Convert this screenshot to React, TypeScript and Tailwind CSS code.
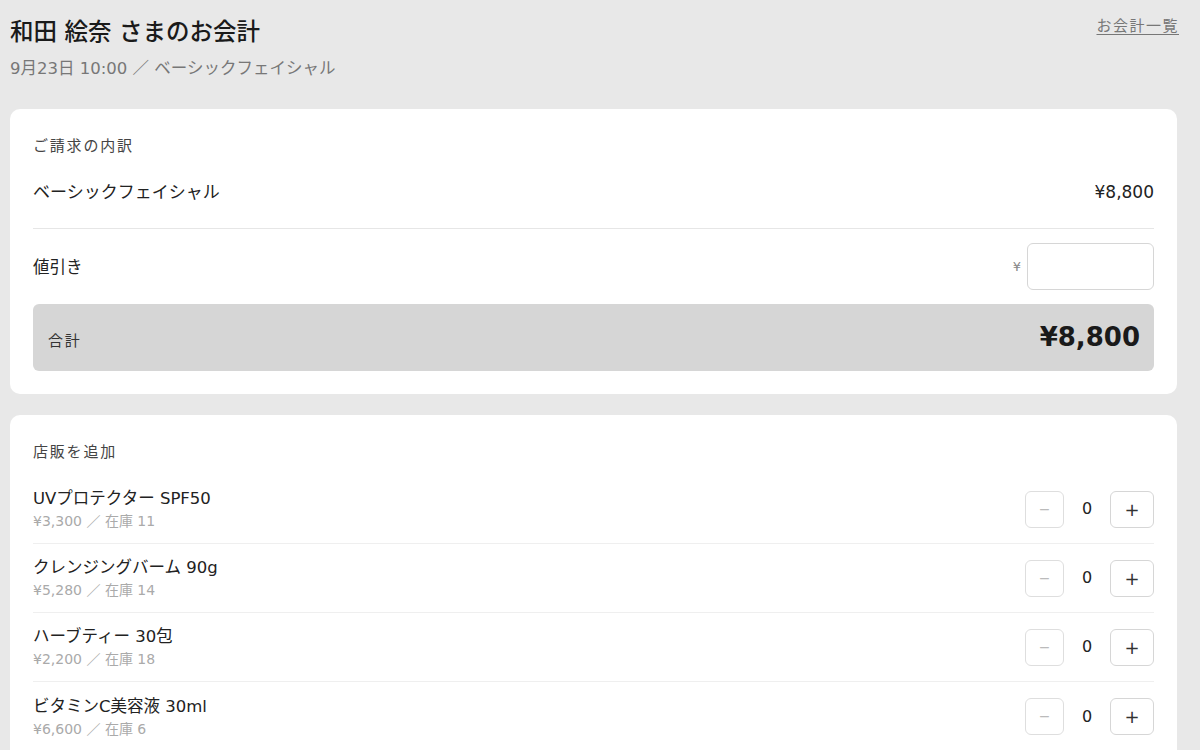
import { useState } from "react";

const products = [
  { name: "UVプロテクター SPF50", price: "¥3,300", stock: 11 },
  { name: "クレンジングバーム 90g", price: "¥5,280", stock: 14 },
  { name: "ハーブティー 30包", price: "¥2,200", stock: 18 },
  { name: "ビタミンC美容液 30ml", price: "¥6,600", stock: 6 },
];

function ProductRow({ name, price, stock, last }: { name: string; price: string; stock: number; last: boolean }) {
  const [qty, setQty] = useState(0);
  return (
    <div className={`flex h-[69px] items-center justify-between ${last ? "" : "border-b border-[#efefef]"}`}>
      <div className="flex flex-col">
        <div className="text-[16.5px] leading-[24px] text-[#222]">{name}</div>
        <div className="text-[14px] leading-[20px] text-[#aaa]">
          {price} ／ 在庫 {stock}
        </div>
      </div>
      <div className="flex items-center">
        <button
          onClick={() => setQty(Math.max(0, qty - 1))}
          className="flex h-[37px] w-[39px] items-center justify-center rounded-[6px] border border-[#dedede] bg-white text-[14px] text-[#bbb]"
        >
          −
        </button>
        <div className="w-[46px] text-center text-[16px] text-[#222]">{qty}</div>
        <button
          onClick={() => setQty(qty + 1)}
          className="flex h-[37px] w-[44px] items-center justify-center rounded-[6px] border border-[#d6d6d6] bg-white text-[18px] text-[#333]"
        >
          +
        </button>
      </div>
    </div>
  );
}

export default function App() {
  return (
    <div
      className="min-h-[750px] bg-[#e8e8e8] px-[10px] pt-[16px]"
      style={{ fontFamily: '"DejaVu Sans", "Noto Sans CJK JP", sans-serif' }}
    >
      <div className="flex items-start justify-between pr-[11px]">
        <div>
          <h1 className="text-[23.5px] font-medium leading-[32px] text-[#1a1a1a]">和田 絵奈 さまのお会計</h1>
          <div className="mt-[9px] text-[16.5px] leading-[24px] text-[#777]">9月23日 10:00 ／ ベーシックフェイシャル</div>
        </div>
        <a href="#" className="-mt-[2px] text-[15px] leading-[24px] tracking-[0.1em] text-[#777] underline underline-offset-[3px]">
          お会計一覧
        </a>
      </div>

      <section className="mt-[28px] mr-[13px] rounded-[10px] bg-white px-[23px] pt-[25px] pb-[23px]">
        <h2 className="text-[15px] leading-[24px] tracking-[0.12em] text-[#444]">ご請求の内訳</h2>
        <div className="mt-[22px] flex items-center justify-between border-b border-[#e6e6e6] pb-[24px] text-[17px] leading-[24px] text-[#222]">
          <span>ベーシックフェイシャル</span>
          <span>¥8,800</span>
        </div>
        <div className="flex items-center justify-between py-[14px]">
          <span className="mt-[3px] text-[16.5px] text-[#222]">値引き</span>
          <div className="flex items-center gap-[6px]">
            <span className="text-[13px] text-[#888]">¥</span>
            <input className="h-[47px] w-[127px] rounded-[6px] border border-[#d6d6d6] bg-white px-2 text-[16px] outline-none" />
          </div>
        </div>
        <div className="flex h-[67px] items-center justify-between rounded-[6px] bg-[#d6d6d6] pl-[15px] pr-[14px]">
          <span className="mt-[8px] text-[15px] tracking-[0.12em] text-[#333]">合計</span>
          <span className="text-[26px] font-bold text-[#1a1a1a]">¥8,800</span>
        </div>
      </section>

      <section className="mt-[21px] mr-[13px] rounded-[10px] bg-white px-[23px] pt-[25px] pb-[10px]">
        <h2 className="mb-[11px] text-[15px] leading-[24px] tracking-[0.12em] text-[#444]">店販を追加</h2>
        {products.map((p, i) => (
          <ProductRow key={p.name} {...p} last={i === products.length - 1} />
        ))}
      </section>
    </div>
  );
}
